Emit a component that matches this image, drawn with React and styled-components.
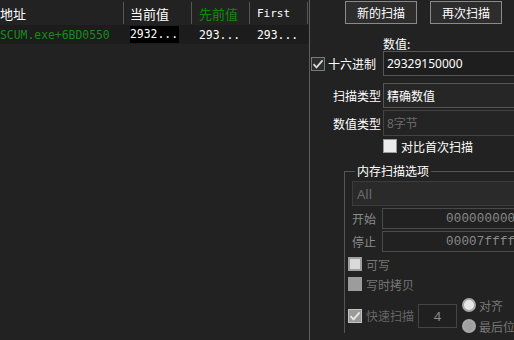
import styled, { createGlobalStyle } from "styled-components";

const GlobalStyle = createGlobalStyle`
  html, body {
    margin: 0;
    padding: 0;
    background: #222222;
  }
  body {
    font-family: "Noto Sans", "Noto Sans CJK SC", sans-serif;
    overflow: hidden;
  }
`;

const Window = styled.div`
  width: 514px;
  height: 340px;
  display: flex;
  background: #222222;
  color: #ffffff;
  overflow: hidden;
  font-size: 12px;
`;

const ListPanel = styled.div`
  width: 309px;
  flex: none;
  border-right: 1px solid #5f5f5f;
  display: flex;
  flex-direction: column;
`;

const HeaderRow = styled.div`
  display: grid;
  grid-template-columns: 124px 68px 58px 58px;
  height: 25px;
  background: #222222;
`;

const HeaderCell = styled.div`
  display: flex;
  align-items: center;
  padding-left: ${(p) => p.$pad || 0}px;
  border-right: 1px solid #565656;
  margin: 2px 0 1px;
  font-family: ${(p) => (p.$mono ? '"DejaVu Sans Mono", monospace' : '"Noto Sans CJK SC", sans-serif')};
  font-size: ${(p) => (p.$mono ? "11px" : "13px")};
  color: ${(p) => p.$color || "#ffffff"};
  white-space: nowrap;
`;

const DataRow = styled.div`
  display: grid;
  grid-template-columns: 124px 68px 58px 58px;
  height: 19px;
  background: #1c1c1c;
  font-family: "DejaVu Sans Mono", monospace;
  font-size: 11.4px;
`;

const DataCell = styled.div`
  display: flex;
  align-items: center;
  padding-left: ${(p) => p.$pad || 0}px;
  color: ${(p) => p.$color || "#ffffff"};
  white-space: nowrap;
  overflow: hidden;
`;

const Selected = styled.span`
  background: #000000;
  padding: 1px 1px 2px 0;
`;

const ScanPanel = styled.div`
  flex: 1;
  display: flex;
  flex-direction: column;
  padding-top: 1px;
  overflow: hidden;
  min-width: 0;
`;

const ButtonRow = styled.div`
  display: flex;
  gap: 13px;
  padding-left: 35px;
`;

const Button = styled.div`
  width: 70px;
  height: 21px;
  border: 1px solid #8a8a8a;
  background: #2d2d2d;
  display: flex;
  align-items: center;
  justify-content: center;
  font-family: "Noto Sans CJK SC", sans-serif;
  font-size: 12px;
`;

const ValueCaption = styled.div`
  margin-top: 13px;
  height: 14px;
  line-height: 14px;
  padding-left: 73px;
  font-family: "Noto Sans CJK SC", sans-serif;
  font-size: 12px;
`;

const FieldRow = styled.div`
  display: grid;
  grid-template-columns: 73px 170px;
  height: ${(p) => p.$h || 25}px;
  margin-top: ${(p) => p.$mt || 0}px;
  align-items: center;
`;

const RightLabel = styled.div`
  text-align: right;
  padding-right: 2px;
  font-family: "Noto Sans CJK SC", sans-serif;
  font-size: 12px;
  color: #ffffff;
`;

const HexLabel = styled.label`
  display: flex;
  align-items: center;
  gap: 3px;
  padding-left: 1px;
  font-family: "Noto Sans CJK SC", sans-serif;
  font-size: 12px;
`;

const Field = styled.div`
  height: 100%;
  box-sizing: border-box;
  border: 1px solid ${(p) => p.$border || "#555555"};
  background: ${(p) => p.$bg || "#1e1e1e"};
  color: ${(p) => p.$color || "#ffffff"};
  display: flex;
  align-items: center;
  padding-left: 3px;
  font-family: "Noto Sans", "Noto Sans CJK SC", sans-serif;
  font-size: 12px;
  white-space: nowrap;
`;

const Box = styled.span`
  width: 14px;
  height: 14px;
  flex: none;
  box-sizing: border-box;
  border: ${(p) => p.$bw || 1}px solid ${(p) => p.$border || "#8a8a8a"};
  background: ${(p) => p.$fill || "#333333"};
  display: flex;
  align-items: center;
  justify-content: center;
`;

const CheckRow = styled.label`
  display: flex;
  align-items: center;
  gap: 4px;
  height: 14px;
  margin-top: ${(p) => p.$mt || 0}px;
  padding-left: ${(p) => p.$indent || 0}px;
  font-family: "Noto Sans CJK SC", sans-serif;
  font-size: 12px;
  color: ${(p) => p.$color || "#ffffff"};
  white-space: nowrap;
`;

const Group = styled.fieldset`
  margin: 11px 0 0 34px;
  padding: 3px 0 0 3px;
  width: 200px;
  min-width: 0;
  border: 1px solid #555555;
  border-right: none;
  border-bottom: none;
  display: flex;
  flex-direction: column;
`;

const GroupTitle = styled.legend`
  margin-left: 7px;
  padding: 0 2px;
  font-family: "Noto Sans CJK SC", sans-serif;
  font-size: 12px;
  line-height: 14px;
  color: #ffffff;
`;

const GroupField = styled.div`
  height: 25px;
  margin-left: 4px;
  box-sizing: border-box;
  border: 1px solid #3c3c3c;
  background: #2a2a2a;
  color: #6a6a6a;
  display: flex;
  align-items: center;
  padding-left: 4px;
  font-family: "Noto Sans", sans-serif;
  font-size: 13px;
`;

const RangeRow = styled.div`
  display: grid;
  grid-template-columns: 30px 140px;
  height: 21px;
  margin-top: ${(p) => p.$mt || 0}px;
  padding-left: 4px;
  align-items: center;
`;

const DimLabel = styled.span`
  font-family: "Noto Sans CJK SC", sans-serif;
  font-size: 12px;
  color: #8a8a8a;
`;

const RangeField = styled.div`
  height: 100%;
  box-sizing: border-box;
  border: 1px solid #4a4a4a;
  background: #212121;
  color: #8a8a8a;
  display: flex;
  align-items: center;
  padding-left: 63px;
  font-family: "Liberation Mono", monospace;
  font-size: 12.5px;
  letter-spacing: 0.2px;
  white-space: nowrap;
`;

const FastRow = styled.div`
  display: flex;
  align-items: center;
  margin-top: 7px;
  height: 35px;
`;

const SmallInput = styled.div`
  width: 39px;
  height: 24px;
  box-sizing: border-box;
  margin-left: 4px;
  border: 1px solid #444444;
  background: #202020;
  color: #8a8a8a;
  display: flex;
  align-items: center;
  justify-content: center;
  font-family: "Noto Sans", sans-serif;
  font-size: 13px;
`;

const RadioGroup = styled.div`
  display: flex;
  flex-direction: column;
  gap: 7px;
  margin-left: 5px;
`;

const RadioRow = styled.label`
  display: flex;
  align-items: center;
  gap: 3px;
  height: 14px;
  font-family: "Noto Sans CJK SC", sans-serif;
  font-size: 12px;
  color: #777777;
  white-space: nowrap;
`;

const Radio = styled.span`
  width: 14px;
  height: 14px;
  box-sizing: border-box;
  border-radius: 50%;
  background: ${(p) => (p.$filled ? "#a0a0a0" : "#e6e6e6")};
  border: 2px solid #a8a8a8;
`;

function Check({ color = "#d8d8d8" }) {
  return (
    <svg width="12" height="12" viewBox="0 0 12 12">
      <path d="M1.5 6.2 L4.5 9.3 L10.6 2.4" fill="none" stroke={color} strokeWidth="1.8" />
    </svg>
  );
}

export default function App() {
  return (
    <>
      <GlobalStyle />
      <Window>
        <ListPanel>
          <HeaderRow>
            <HeaderCell>地址</HeaderCell>
            <HeaderCell $pad={6}>当前值</HeaderCell>
            <HeaderCell $pad={7} $color="#128a12">先前值</HeaderCell>
            <HeaderCell $pad={7} $mono>First</HeaderCell>
          </HeaderRow>
          <DataRow>
            <DataCell $color="#1a8a1a">SCUM.exe+6BD0550</DataCell>
            <DataCell $pad={6}>
              <Selected>2932...</Selected>
            </DataCell>
            <DataCell $pad={7}>293...</DataCell>
            <DataCell $pad={7}>293...</DataCell>
          </DataRow>
        </ListPanel>

        <ScanPanel>
          <ButtonRow>
            <Button>新的扫描</Button>
            <Button>再次扫描</Button>
          </ButtonRow>

          <ValueCaption>数值:</ValueCaption>
          <FieldRow>
            <HexLabel>
              <Box $fill="#2e2e2e" $border="#7a7a7a">
                <Check />
              </Box>
              十六进制
            </HexLabel>
            <Field>29329150000</Field>
          </FieldRow>

          <FieldRow $mt={7}>
            <RightLabel>扫描类型</RightLabel>
            <Field $bg="#262626">精确数值</Field>
          </FieldRow>

          <FieldRow $mt={2} $h={26}>
            <RightLabel>数值类型</RightLabel>
            <Field $bg="#242424" $border="#444444" $color="#6a6a6a">
              8字节
            </Field>
          </FieldRow>

          <CheckRow $mt={3} $indent={73}>
            <Box $fill="#ececec" $border="#9a9a9a" />
            对比首次扫描
          </CheckRow>

          <Group>
            <GroupTitle>内存扫描选项</GroupTitle>
            <GroupField>All</GroupField>
            <RangeRow $mt={2}>
              <DimLabel>开始</DimLabel>
              <RangeField>000000000</RangeField>
            </RangeRow>
            <RangeRow $mt={2}>
              <DimLabel>停止</DimLabel>
              <RangeField>00007ffff</RangeField>
            </RangeRow>
            <CheckRow $mt={5} $color="#767676">
              <Box $fill="#dadada" $border="#a0a0a0" $bw={2} />
              可写
            </CheckRow>
            <CheckRow $mt={6} $color="#767676">
              <Box $fill="#9c9c9c" $border="#9c9c9c" />
              写时拷贝
            </CheckRow>
            <FastRow>
              <CheckRow $color="#666666">
                <Box $fill="#9a9a9a" $border="#c4c4c4">
                  <Check color="#e8e8e8" />
                </Box>
                快速扫描
              </CheckRow>
              <SmallInput>4</SmallInput>
              <RadioGroup>
                <RadioRow>
                  <Radio />
                  对齐
                </RadioRow>
                <RadioRow>
                  <Radio $filled />
                  最后位
                </RadioRow>
              </RadioGroup>
            </FastRow>
          </Group>
        </ScanPanel>
      </Window>
    </>
  );
}
